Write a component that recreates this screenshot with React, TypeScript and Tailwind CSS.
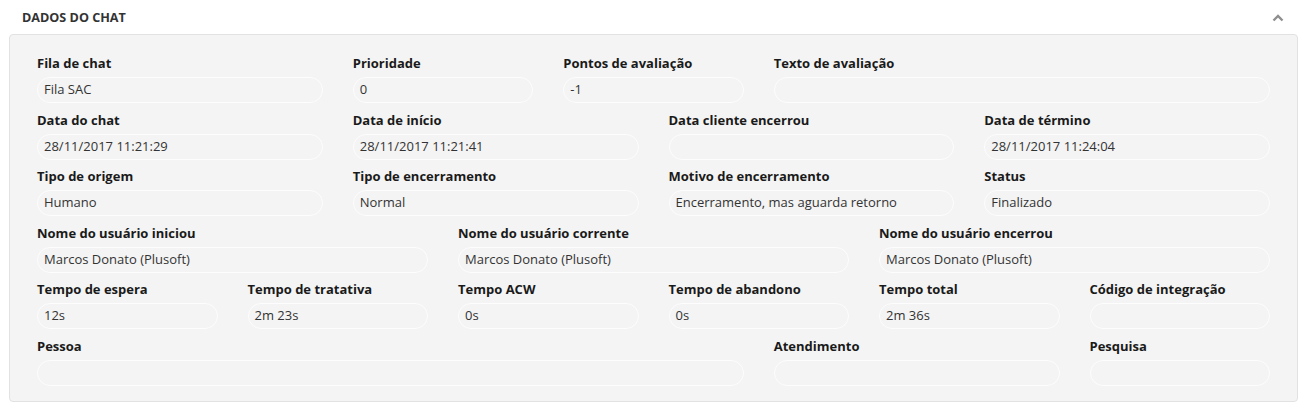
type Field = { label: string; value?: string; span: string };

const rows: Field[][] = [
  [
    { label: "Fila de chat", value: "Fila SAC", span: "col-span-3" },
    { label: "Prioridade", value: "0", span: "col-span-2" },
    { label: "Pontos de avaliação", value: "-1", span: "col-span-2" },
    { label: "Texto de avaliação", span: "col-span-5" },
  ],
  [
    { label: "Data do chat", value: "28/11/2017 11:21:29", span: "col-span-3" },
    { label: "Data de início", value: "28/11/2017 11:21:41", span: "col-span-3" },
    { label: "Data cliente encerrou", span: "col-span-3" },
    { label: "Data de término", value: "28/11/2017 11:24:04", span: "col-span-3" },
  ],
  [
    { label: "Tipo de origem", value: "Humano", span: "col-span-3" },
    { label: "Tipo de encerramento", value: "Normal", span: "col-span-3" },
    { label: "Motivo de encerramento", value: "Encerramento, mas aguarda retorno", span: "col-span-3" },
    { label: "Status", value: "Finalizado", span: "col-span-3" },
  ],
  [
    { label: "Nome do usuário iniciou", value: "Marcos Donato (Plusoft)", span: "col-span-4" },
    { label: "Nome do usuário corrente", value: "Marcos Donato (Plusoft)", span: "col-span-4" },
    { label: "Nome do usuário encerrou", value: "Marcos Donato (Plusoft)", span: "col-span-4" },
  ],
  [
    { label: "Tempo de espera", value: "12s", span: "col-span-2" },
    { label: "Tempo de tratativa", value: "2m 23s", span: "col-span-2" },
    { label: "Tempo ACW", value: "0s", span: "col-span-2" },
    { label: "Tempo de abandono", value: "0s", span: "col-span-2" },
    { label: "Tempo total", value: "2m 36s", span: "col-span-2" },
    { label: "Código de integração", span: "col-span-2" },
  ],
  [
    { label: "Pessoa", span: "col-span-7" },
    { label: "Atendimento", span: "col-span-3" },
    { label: "Pesquisa", span: "col-span-2" },
  ],
];

function FieldBox({ field }: { field: Field }) {
  return (
    <div className={`${field.span} flex flex-col`}>
      <label className="h-[18px] mb-[5px] text-[13px] leading-[18px] font-bold text-[#1a1a1a] whitespace-nowrap">
        {field.label}
      </label>
      <div className="h-[26px] rounded-full border border-[#fdfdfd] bg-[#f4f4f4] px-[6px] flex items-center text-[13px] text-[#333] whitespace-nowrap overflow-hidden">
        {field.value}
      </div>
    </div>
  );
}

export default function App() {
  return (
    <div
      className="w-[1310px] h-[408px] bg-white"
      style={{ fontFamily: '"Open Sans", "Liberation Sans", sans-serif' }}
    >
      <div className="h-[34px] flex items-center justify-between pl-[22px] pr-[26px] pt-[2px]">
        <h2 className="text-[12.6px] font-bold text-[#333]">DADOS DO CHAT</h2>
        <svg width="12" height="8" viewBox="0 0 12 8">
          <path d="M1.5 6.5 L6 2 L10.5 6.5" fill="none" stroke="#8f8f8f" strokeWidth="2.4" />
        </svg>
      </div>
      <div className="ml-[9px] mr-[12px] rounded-[4px] border border-[#e2e2e2] bg-[#f4f4f4] px-[27px] pt-[19px] pb-[8px]">
        {rows.map((row, i) => (
          <div key={i} className="grid grid-cols-12 gap-x-[30px] mb-[7.5px]">
            {row.map((f) => (
              <FieldBox key={f.label} field={f} />
            ))}
          </div>
        ))}
      </div>
    </div>
  );
}
